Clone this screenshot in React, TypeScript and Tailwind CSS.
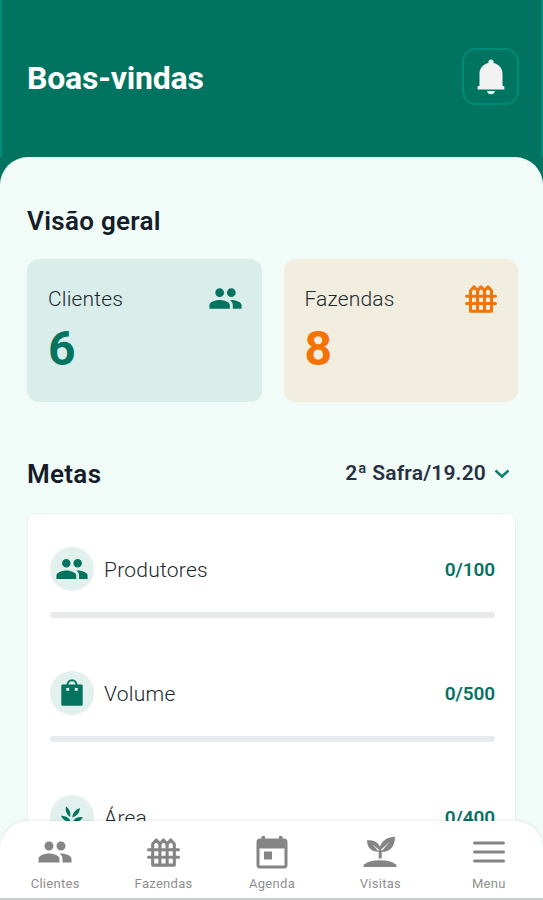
import type { ReactNode } from "react";
import clsx from "clsx";
import { MdPeople } from "react-icons/md";

interface IconProps {
    className?: string;
}

const FenceIcon = ({ className }: IconProps) => (
    <svg viewBox="0 0 32 30" fill="none" stroke="currentColor" strokeWidth="3" strokeLinejoin="round" strokeLinecap="round" className={className}>
        <path d="M5.500 27.200V6.800L9 2.800L12.500 6.800L16 2.800L19.500 6.800L23 2.800L26.500 6.800V27.200Z" />
        <path d="M12.500 6.800V27M19.500 6.800V27" />
        <path d="M1.500 12.300H30.500M1.500 19.600H30.500" />
    </svg>
);

const BellIcon = ({ className }: IconProps) => (
    <svg viewBox="0 0 28 36" fill="currentColor" className={className}>
        <path d="M14 0.5c1.500 0 2.600 1.200 2.600 2.800v.8c5.200 1.300 8.900 5.300 8.900 10.700v11.900l1.900.8v3H0.600v-3l1.900-.8V14.800c0-5.400 3.700-9.400 8.900-10.700v-.8C11.400 1.700 12.500 0.500 14 0.500Z" />
        <path d="M10 32h8c-.4 2-2 3.300-4 3.300s-3.600-1.300-4-3.300Z" />
    </svg>
);

const BagIcon = ({ className }: IconProps) => (
    <svg viewBox="0 0 22 27" className={className}>
        <path d="M6.500 9V5.800a4.500 4.500 0 0 1 9 0V9" fill="none" stroke="currentColor" strokeWidth="2" />
        <path fill="currentColor" fillRule="evenodd" d="M1.500 5.500h19a1.200 1.200 0 0 1 1.200 1.200v18.500a1.500 1.500 0 0 1-1.500 1.500H1.800a1.500 1.500 0 0 1-1.500-1.500V6.700a1.200 1.200 0 0 1 1.200-1.200ZM5.200 8.700v3h3v-3ZM13.800 8.700v3h3v-3Z" />
    </svg>
);

const LeavesIcon = ({ className }: IconProps) => (
    <svg viewBox="0 0 24 24" fill="currentColor" className={className}>
        <path d="M6 .5C9.500 3 11 6.500 10 11C6.500 8.500 5 4.500 6 .5Z" />
        <path d="M19.800 2C19.800 6.500 17 10 12.300 11.500C12.500 7 15.500 3.500 19.800 2Z" />
        <path d="M1 9.800C5.500 9.500 9 11.500 11 16C6.500 16 2.800 14 1 9.800Z" />
        <path d="M22.800 11.200C20.500 15 17 16.800 12.500 16C14.500 12.500 18 10.500 22.800 11.200Z" />
        <path d="M11 15h1.800v8H11Z" />
    </svg>
);

const CalendarIcon = ({ className }: IconProps) => (
    <svg viewBox="0 0 32 34" className={className}>
        <rect x="2" y="5" width="28" height="27" rx="2" fill="none" stroke="currentColor" strokeWidth="3" />
        <path d="M5.500 1h3.500v4H5.500ZM23 1h3.500v4H23ZM2 5h28v8.500H2ZM8 16.500h8v8H8Z" fill="currentColor" />
    </svg>
);

const SproutIcon = ({ className }: IconProps) => (
    <svg viewBox="0 0 34 32" fill="currentColor" className={className}>
        <path fillRule="evenodd" d="M4 4.300C10 4 14.500 5.800 17 10.500C19.500 4 24.500 1 32 .7C32 10.500 27 16 18.700 16V22.500H15.700V16C8 15.500 4 11.500 4 4.300ZM9.500 8.300l5.700 6.700 1.100-1.100ZM26.500 6l-8.600 7.700 1.100 1.100Z" />
        <path d="M.5 31v-2.300C4.500 25.800 10 24.300 17 24.300s12.500 1.500 16.500 4.400V31Z" />
    </svg>
);

const MenuIcon = ({ className }: IconProps) => (
    <svg viewBox="0 0 32 24" fill="none" stroke="currentColor" strokeWidth="3" strokeLinecap="round" className={className}>
        <path d="M1.500 3H30.500M1.500 12H30.500M1.500 21H30.500" />
    </svg>
);

interface OverviewCardProps {
    label: string;
    value: number;
    icon: ReactNode;
    className?: string;
}

const OverviewCard = ({ label, value, icon, className }: OverviewCardProps) => {
    return <div className={clsx("flex-1 h-[143px] rounded-xl pl-[21px] pr-[21px] pt-6", className)}>
        <div className="flex items-center justify-between h-8">
            <span className="pt-[2px] text-[21px] text-[#1d2b30] font-light tracking-[0.15px]">{label}</span>
            {icon}
        </div>
        <div className="pt-[2px] text-[48px] leading-[64px] font-bold">{value}</div>
    </div>;
};

interface GoalProps {
    label: string;
    progress: string;
    icon: ReactNode;
}

const Goal = ({ label, progress, icon }: GoalProps) => {
    return <div className="h-[124px] shrink-0">
        <div className="flex items-center h-11">
            <div className="size-11 rounded-full bg-[#e2f0ee] text-[#04735f] flex items-center justify-center">{icon}</div>
            <span className="ml-2.5 pt-[3px] text-[21px] text-[#20282c] font-light tracking-[0.25px]">{label}</span>
            <span className="ml-auto pt-[3px] text-[19px] font-semibold text-[#04735f] tracking-[-0.1px]">{progress}</span>
        </div>
        <div className="mt-[21px] h-1.5 rounded-full bg-[#e8eaed]" />
    </div>;
};

const navItems = [
    { label: "Clientes", icon: <MdPeople className="size-9" /> },
    { label: "Fazendas", icon: <FenceIcon className="w-[33px] h-[31px]" /> },
    { label: "Agenda", icon: <CalendarIcon className="w-8 h-[34px]" /> },
    { label: "Visitas", icon: <SproutIcon className="w-[34px] h-8" /> },
    { label: "Menu", icon: <MenuIcon className="w-8 h-6" /> },
];

const BottomNav = () => {
    return <nav className="h-[79px] shrink-0 -mt-[79px] relative bg-white rounded-t-[28px] border-b-2 border-[#c9cbcb] shadow-[0_-1px_3px_rgba(0,0,0,0.08)] flex pl-px">
        {navItems.map((item) => (
            <div key={item.label} className="flex-1 flex flex-col items-center text-[#858585]">
                <div className="h-[62px] flex items-center">{item.icon}</div>
                <span className="-mt-[7px] text-[13px] leading-4 text-[#8f8f8f] tracking-[0.3px]">{item.label}</span>
            </div>
        ))}
    </nav>;
};

export default function App() {
    return <div className="h-[900px] w-full flex flex-col overflow-hidden bg-[#007461] font-['Roboto','Liberation_Sans',sans-serif]">
        <header className="h-[157px] shrink-0 flex items-center justify-between pl-[25px] pr-[22px] pb-1 border-x-2 border-[#008b7b]">
            <h1 className="pt-[3px] text-[32px] font-bold text-white tracking-[-0.2px]">Boas-vindas</h1>
            <button className="size-[57px] rounded-[14px] border-2 border-[#008b78] flex items-center justify-center text-[#f2f2f2]">
                <BellIcon className="w-7 h-9" />
            </button>
        </header>
        <main className="flex-1 min-h-0 overflow-hidden bg-[#f1fbf8] rounded-t-[28px] px-[27px] flex flex-col">
            <h2 className="mt-12 text-[26px] leading-8 font-semibold text-[#151d29] tracking-[0.3px]">Visão geral</h2>
            <div className="mt-[22px] flex gap-[22px] -mr-[2px]">
                <OverviewCard label="Clientes" value={6} icon={<MdPeople className="size-[35px] -mr-[2px] -mt-[2px]" />} className="bg-[#d9edea] text-[#04735f]" />
                <OverviewCard label="Fazendas" value={8} icon={<FenceIcon className="w-8 h-[30px]" />} className="bg-[#f1eddf] text-[#f37307]" />
            </div>
            <div className="mt-14 flex items-center justify-between h-8 pr-1.5">
                <h2 className="text-[26px] font-semibold text-[#151d29] tracking-[0.3px]">Metas</h2>
                <button className="flex items-center gap-2 text-[21px] font-semibold text-[#273142] tracking-[0.15px]">
                    2ª Safra/19.20
                    <svg viewBox="0 0 16 10" fill="none" stroke="#04806b" strokeWidth="2.4" className="w-4 h-2.5">
                        <path d="M1.500 1.500L8 7.500L14.500 1.500" />
                    </svg>
                </button>
            </div>
            <div className="mt-[23px] h-[400px] shrink-0 bg-white rounded-lg border border-[#e9f2f0] pl-[22px] pr-5 pt-[33px] flex flex-col">
                <Goal label="Produtores" progress="0/100" icon={<MdPeople className="size-[34px]" />} />
                <Goal label="Volume" progress="0/500" icon={<BagIcon className="w-[22px] h-[27px] -mt-px" />} />
                <Goal label="Área" progress="0/400" icon={<LeavesIcon className="size-6 mt-[2px]" />} />
            </div>
        </main>
        <BottomNav />
    </div>;
}
